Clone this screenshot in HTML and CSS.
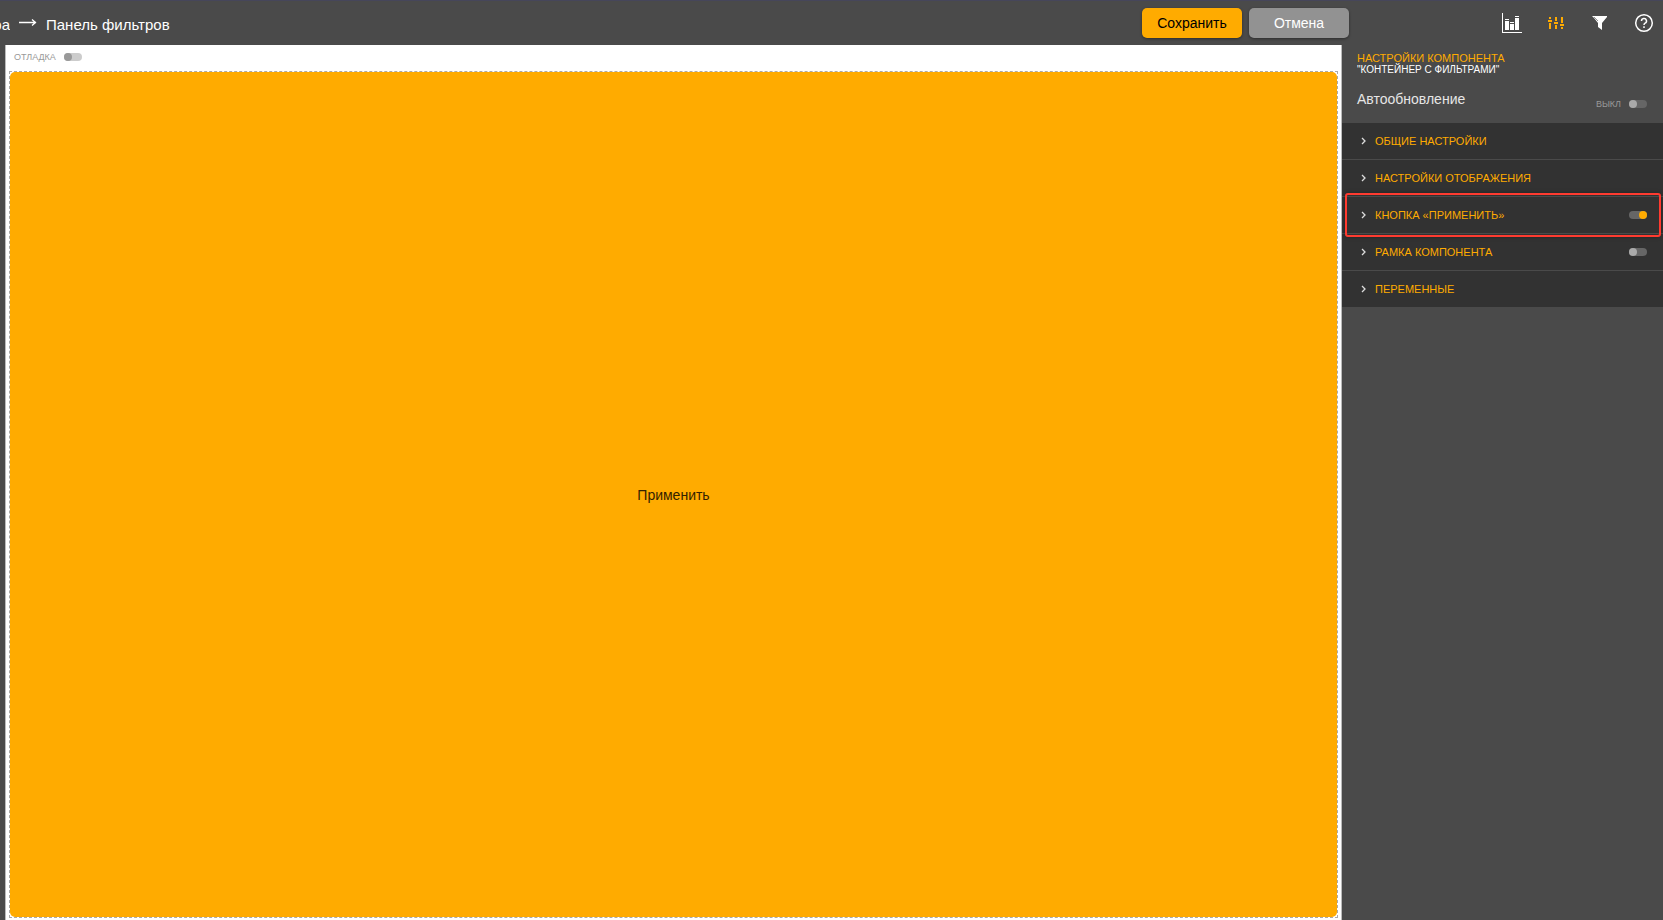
FILE: index.html
```html
<!DOCTYPE html>
<html lang="ru">
<head>
    <meta charset="UTF-8">
    <meta name="viewport" content="width=device-width, initial-scale=1.0">
    <title>Панель фильтров</title>
    <link rel="stylesheet" href="styles.css">
</head>
<body>
    <!-- Top bar -->
    <header class="topbar">
        <nav class="breadcrumbs">
            <a class="crumb-parent" href="#">ра</a>
            <svg class="crumb-arrow" width="18" height="10" viewBox="0 0 18 10" fill="none" stroke="#fff">
                <path d="M0 4.500h17M13 1.500l3.500 3-3.500 3" stroke-width="1.300"/>
            </svg>
            <span>Панель фильтров</span>
        </nav>
        <div class="actions">
            <button type="button" class="btn btn-save">Сохранить</button>
            <button type="button" class="btn btn-cancel">Отмена</button>
        </div>
        <div class="tools">
            <button type="button" class="tool" aria-label="Данные">
                <svg width="20" height="20" viewBox="0 0 20 20" fill="#fff">
                    <path d="M0 0h1v19h19v1H0zM3 8h4v9H3zM3 6h4v1H3zM8 11h4v6H8zM8 9h4v1H8zM13 5h4v12h-4zM13 3h4v1h-4z"/>
                </svg>
            </button>
            <button type="button" class="tool" aria-label="Настройки">
                <svg width="20" height="20" viewBox="0 0 20 20" fill="#ffab00">
                    <path d="M3 4h2v2H3zM2 7h4v2H2zM3 10h2v6H3zM9 4h2v4H9zM8 9h4v2H8zM9 12h2v4H9zM15 4h2v6h-2zM14 11h4v2h-4zM15 14h2v2h-2z"/>
                </svg>
            </button>
            <button type="button" class="tool" aria-label="Фильтры">
                <svg width="20" height="20" viewBox="0 0 20 20" fill="#fff">
                    <path d="M2 3h15v1l-5 6v7l-4-3v-4L4 5z"/>
                    <path d="M4 4l4 4" stroke="#4a4a4a" stroke-width=".6"/>
                </svg>
            </button>
            <button type="button" class="tool" aria-label="Справка">
                <svg width="20" height="20" viewBox="0 0 20 20" fill="none" stroke="#fff" stroke-width="1.5">
                    <circle cx="10" cy="10" r="8.3"/>
                    <path d="M7.5 8a2.5 2.5 0 1 1 3.6 2.2c-.8.4-1.1.8-1.1 1.8M10 13.3v1.6"/>
                </svg>
            </button>
        </div>
    </header>

    <div class="workspace">
        <!-- Canvas -->
        <main class="canvas">
            <label class="debug">ОТЛАДКА <input type="checkbox" class="toggle toggle-light"></label>
            <div class="widget">
                <button type="button" class="apply">Применить</button>
            </div>
        </main>

        <!-- Component settings -->
        <aside class="sidebar">
            <div class="sidebar-head">
                <h2>НАСТРОЙКИ КОМПОНЕНТА</h2>
                <p class="component-name">"КОНТЕЙНЕР С ФИЛЬТРАМИ"</p>
                <div class="autoupdate">
                    <span id="autoupdate">Автообновление</span>
                    <label class="state">ВЫКЛ <input type="checkbox" class="toggle" aria-describedby="autoupdate"></label>
                </div>
            </div>
            <ul class="sections">
                <li class="section">
                    <button type="button" class="section-title"><svg width="5" height="8" viewBox="0 0 5 8"><path d="M1 1l3 3-3 3"/></svg>ОБЩИЕ НАСТРОЙКИ</button>
                </li>
                <li class="section">
                    <button type="button" class="section-title"><svg width="5" height="8" viewBox="0 0 5 8"><path d="M1 1l3 3-3 3"/></svg>НАСТРОЙКИ ОТОБРАЖЕНИЯ</button>
                </li>
                <li class="section highlighted">
                    <button type="button" class="section-title"><svg width="5" height="8" viewBox="0 0 5 8"><path d="M1 1l3 3-3 3"/></svg>КНОПКА «ПРИМЕНИТЬ»</button>
                    <input type="checkbox" class="toggle" aria-label="Кнопка «Применить»" checked>
                </li>
                <li class="section">
                    <button type="button" class="section-title"><svg width="5" height="8" viewBox="0 0 5 8"><path d="M1 1l3 3-3 3"/></svg>РАМКА КОМПОНЕНТА</button>
                    <input type="checkbox" class="toggle" aria-label="Рамка компонента">
                </li>
                <li class="section">
                    <button type="button" class="section-title"><svg width="5" height="8" viewBox="0 0 5 8"><path d="M1 1l3 3-3 3"/></svg>ПЕРЕМЕННЫЕ</button>
                </li>
            </ul>
        </aside>
    </div>
</body>
</html>
```
FILE: styles.css
```css
/* Global Styles */
* {
    box-sizing: border-box;
}

body {
    margin: 0;
    height: 100vh;
    display: flex;
    flex-direction: column;
    overflow: hidden;
    font-family: "Liberation Sans", Arial, sans-serif;
    background-color: #4a4a4a;
    color: white;
}

button {
    font-family: inherit;
    border: none;
    cursor: pointer;
}

/* Top bar */
.topbar {
    display: flex;
    align-items: center;
    height: 45px;
    border-top: 1px solid #46465a;
    padding-right: 9px;
}

.breadcrumbs {
    display: flex;
    flex: 1;
    align-items: center;
    padding-top: 2px;
    font-size: 15px;
}

.crumb-parent {
    display: flex;
    justify-content: flex-end;
    width: 10px;
    overflow: hidden;
    color: white;
    text-decoration: none;
}

.crumb-arrow {
    margin: 0 9px 2px;
}

.actions {
    display: flex;
    gap: 7px;
    margin-right: 153px;
}

.btn {
    width: 100px;
    height: 30px;
    padding: 0;
    border-radius: 5px;
    font-size: 14px;
    box-shadow: 0 1px 3px rgba(0, 0, 0, 0.4);
}

.btn-save {
    background-color: #ffab00;
    color: black;
}

.btn-cancel {
    background-color: #929292;
    color: white;
}

.tools {
    display: flex;
    gap: 24px;
}

.tool {
    display: flex;
    padding: 0;
    background: none;
}

/* Workspace */
.workspace {
    display: flex;
    flex: 1;
    min-height: 0;
}

.canvas {
    display: flex;
    flex: 1;
    flex-direction: column;
    margin-left: 5px;
    padding: 0 3px 2px;
    border-left: 1px solid #bbb;
    border-right: 1px solid #bbb;
    background-color: white;
}

.debug {
    display: flex;
    align-items: center;
    gap: 8px;
    height: 26px;
    padding: 0 0 2px 5px;
    font-size: 9px;
    color: #999;
}

.widget {
    display: flex;
    flex: 1;
    border: 1px dashed #aaa;
}

.apply {
    flex: 1;
    border-radius: 5px;
    background-color: #ffab00;
    font-size: 14px;
    color: #332200;
}

/* Toggle */
.toggle {
    appearance: none;
    display: flex;
    width: 18px;
    height: 8px;
    margin: 0;
    border-radius: 4px;
    background-color: #666;
    cursor: pointer;
}

.toggle::before {
    content: "";
    width: 8px;
    height: 8px;
    border-radius: 50%;
    background-color: #aaa;
}

.toggle:checked {
    justify-content: flex-end;
}

.toggle:checked::before {
    background-color: #ffab00;
}

.toggle-light {
    background-color: #ccc;
}

.toggle-light::before {
    background-color: #999;
}

/* Sidebar */
.sidebar {
    width: 321px;
}

.sidebar-head {
    height: 78px;
    padding: 7px 16px 0 15px;
}

h2 {
    margin: 0;
    font-size: 11px;
    line-height: 12px;
    font-weight: normal;
    color: #ffab00;
}

.component-name {
    margin: 0;
    font-size: 10px;
    line-height: 12px;
}

.autoupdate {
    display: flex;
    justify-content: space-between;
    align-items: flex-start;
    padding-top: 15px;
    font-size: 14px;
    line-height: 16px;
    color: #e6e6e6;
}

.state {
    display: flex;
    align-items: center;
    gap: 8px;
    padding-top: 9px;
    font-size: 9px;
    line-height: 8px;
    color: #999;
}

.sections {
    margin: 0;
    padding: 0;
    list-style: none;
}

.section {
    position: relative;
    display: flex;
    align-items: center;
    height: 37px;
    padding: 0 16px 0 19px;
    border-bottom: 1px solid #4a4a4a;
    background-color: #323232;
}

.section-title {
    display: flex;
    flex: 1;
    align-items: center;
    gap: 9px;
    padding: 0;
    background: none;
    font-size: 11px;
    color: #ffab00;
}

.section-title svg {
    fill: none;
    stroke: #ddd;
    stroke-width: 1.3;
}

/* Frame lies over the neighbouring rows */
.highlighted::after {
    content: "";
    position: absolute;
    inset: -4px 2px -4px 3px;
    border: 2px solid #ff3b30;
    border-radius: 3px;
    box-shadow: 0 0 4px rgba(0, 0, 0, 0.3);
    z-index: 1;
    pointer-events: none;
}
```
